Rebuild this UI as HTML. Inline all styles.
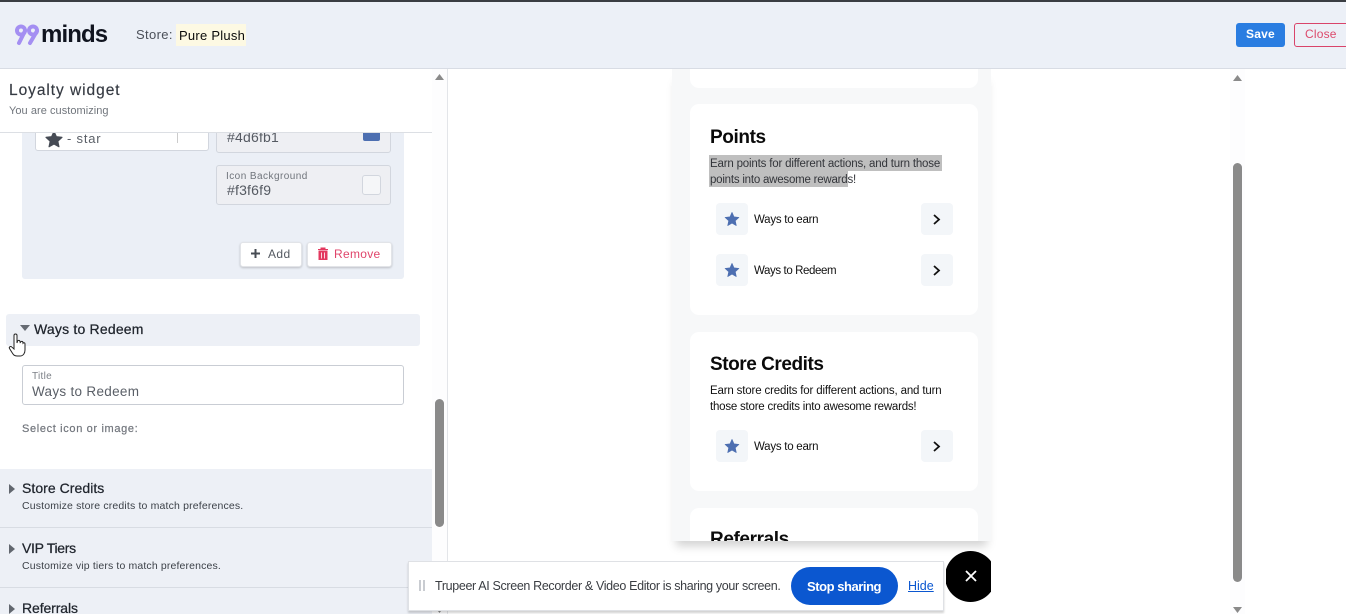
<!DOCTYPE html>
<html>
<head>
<meta charset="utf-8">
<style>
html,body{margin:0;padding:0;background:#fff;}
#r{position:relative;width:1346px;height:614px;overflow:hidden;background:#fff;font-family:"Liberation Sans",sans-serif;}
#r div,#r span.a,#r svg{position:absolute;}
.t{white-space:nowrap;line-height:1;}
</style>
</head>
<body>
<div id="r">
<!-- header -->
<div style="left:0;top:0;width:1346px;height:2px;background:#3a3d42"></div>
<div style="left:0;top:2px;width:1346px;height:66px;background:#ecf0f7;border-bottom:1px solid #d8dce4"></div>
<svg style="left:14px;top:23px" width="27" height="23" viewBox="0 0 27 23"><g fill="none" stroke="#a48ff2" stroke-width="4" stroke-linecap="round"><circle cx="7" cy="7.500" r="4"/><path d="M11 8 L5 20"/><circle cx="19" cy="7.500" r="4"/><path d="M23 8 L16 20"/></g></svg>
<div class="t" style="left:41px;top:23px;font-size:24px;font-weight:bold;color:#10141f;letter-spacing:-.9px">minds</div>
<div class="t" style="left:136px;top:28px;font-size:13px;color:#4b5059;letter-spacing:.35px">Store:</div>
<div style="left:176px;top:24px;width:70px;height:22px;background:#fdf9e3"></div>
<div class="t" style="left:179px;top:29px;font-size:13px;color:#0b0b0b;letter-spacing:.25px">Pure Plush</div>
<div style="left:1236px;top:23px;width:49px;height:24px;background:#2a7de1;border-radius:3px"></div>
<div class="t" style="left:1246px;top:28px;font-size:12px;font-weight:bold;color:#fff;letter-spacing:.2px">Save</div>
<div style="left:1294px;top:23px;width:60px;height:22px;border:1px solid #d9446a;border-radius:3px"></div>
<div class="t" style="left:1305px;top:28px;font-size:12px;color:#dc4a6c;letter-spacing:.2px">Close</div>

<!-- left panel content -->
<div style="left:22px;top:125px;width:382px;height:154px;background:#ebeff6;border-radius:3px"></div>
<div style="left:35px;top:125px;width:172px;height:24px;background:#fff;border:1px solid #d2d6de;border-radius:3px"></div>
<div style="left:177px;top:130px;width:1px;height:13px;background:#ccc"></div>
<svg style="left:45px;top:130px" width="18" height="18" viewBox="0 0 24 23"><path d="M12 1.500l3.200 6.900 7.500.9-5.600 5.100 1.500 7.400L12 18.100l-6.600 3.700 1.500-7.400L1.300 9.300l7.500-.9z" fill="#464b55" stroke="#464b55" stroke-width="1.500" stroke-linejoin="round"/></svg>
<div class="t" style="left:67px;top:132px;font-size:13px;color:#5a5f67;letter-spacing:.8px">- star</div>
<div style="left:216px;top:125px;width:173px;height:26px;background:#eeeff3;border:1px solid #d2d6de;border-radius:3px"></div>
<div class="t" style="left:227px;top:130px;font-size:14px;color:#555a62;letter-spacing:.2px">#4d6fb1</div>
<div style="left:363px;top:125px;width:17px;height:16px;background:#4d6fb1;border-radius:2px"></div>
<div style="left:216px;top:165px;width:173px;height:38px;background:#eeeff3;border:1px solid #d2d6de;border-radius:3px"></div>
<div class="t" style="left:226px;top:172px;font-size:10px;color:#6f747b;letter-spacing:.45px">Icon Background</div>
<div class="t" style="left:227px;top:183px;font-size:14px;color:#555a62;letter-spacing:.2px">#f3f6f9</div>
<div style="left:362px;top:175px;width:17px;height:18px;background:#f5f6f8;border:1px solid #d2d6de;border-radius:3px"></div>
<div style="left:240px;top:242px;width:60px;height:23px;background:#fff;border:1px solid #e2e4e8;border-radius:3px;box-shadow:0 1px 2px rgba(0,0,0,.2)"></div>
<svg style="left:250px;top:248px" width="11" height="11" viewBox="0 0 11 11"><path d="M5.500 1v9M1 5.500h9" stroke="#474c54" stroke-width="2"/></svg>
<div class="t" style="left:268px;top:248px;font-size:12px;color:#555a62;letter-spacing:.4px">Add</div>
<div style="left:307px;top:242px;width:83px;height:23px;background:#fff;border:1px solid #e2e4e8;border-radius:3px;box-shadow:0 1px 2px rgba(0,0,0,.2)"></div>
<svg style="left:317px;top:247px" width="12" height="13" viewBox="0 0 12 13"><path d="M1 2.500h10M4 2.500V1h4v1.500M2 4h8v9H2z" fill="#e3385f" stroke="#e3385f" stroke-width="1"/><path d="M4.500 5.500v6M7.500 5.500v6" stroke="#fff" stroke-width=".8"/></svg>
<div class="t" style="left:334px;top:248px;font-size:12px;color:#e0456b;letter-spacing:.3px">Remove</div>

<!-- Ways to Redeem -->
<div style="left:6px;top:314px;width:414px;height:32px;background:#edf0f6;border-radius:3px"></div>
<svg style="left:20px;top:325px" width="10" height="6" viewBox="0 0 10 6"><path d="M0 0h10L5 6z" fill="#666b73"/></svg>
<div class="t" style="left:34px;top:322px;font-size:14px;color:#1f242c;letter-spacing:.2px;-webkit-text-stroke:.25px #1f242c">Ways to Redeem</div>
<svg style="left:8px;top:332px" width="20" height="26" viewBox="0 0 20 26"><path d="M6 15V3.500a1.500 1.500 0 0 1 3 0V11l.6-2a1.300 1.300 0 0 1 2.400.5l.2 1 .4-.4a1.200 1.200 0 0 1 2.300.6l.1.500a1.100 1.100 0 0 1 2 .6V18c0 3-1.600 6-5 6H9c-2.500 0-3.500-1-5-3.500L1.500 16.500c-.8-1.500 1.200-2.800 2.500-1.300L6 17z" fill="#fff" stroke="#222" stroke-width="1"/></svg>
<div style="left:22px;top:365px;width:380px;height:38px;background:#fff;border:1px solid #c9cdd4;border-radius:3px"></div>
<div class="t" style="left:32px;top:372px;font-size:10px;color:#7c8087;letter-spacing:.3px">Title</div>
<div class="t" style="left:32px;top:385px;font-size:13.500px;color:#5a5f67;letter-spacing:.3px">Ways to Redeem</div>
<div class="t" style="left:22px;top:424px;font-size:11px;color:#72767d;letter-spacing:.65px;-webkit-text-stroke:.2px #72767d">Select icon or image:</div>

<!-- accordion -->
<div style="left:0;top:469px;width:432px;height:145px;background:#edf0f6"></div>
<div style="left:0;top:527px;width:432px;height:1px;background:#d8dce3"></div>
<div style="left:0;top:587px;width:432px;height:1px;background:#d8dce3"></div>
<svg style="left:9px;top:484px" width="6" height="10" viewBox="0 0 6 10"><path d="M0 0l6 5-6 5z" fill="#62676f"/></svg>
<svg style="left:9px;top:544px" width="6" height="10" viewBox="0 0 6 10"><path d="M0 0l6 5-6 5z" fill="#62676f"/></svg>
<svg style="left:9px;top:604px" width="6" height="10" viewBox="0 0 6 10"><path d="M0 0l6 5-6 5z" fill="#62676f"/></svg>
<div class="t" style="left:22px;top:481px;font-size:14px;color:#1f242c;letter-spacing:.05px;-webkit-text-stroke:.25px #1f242c">Store Credits</div>
<div class="t" style="left:22px;top:501px;font-size:10.500px;color:#3c4148;letter-spacing:.16px">Customize store credits to match preferences.</div>
<div class="t" style="left:22px;top:541px;font-size:14px;color:#1f242c;letter-spacing:-.3px;-webkit-text-stroke:.25px #1f242c">VIP Tiers</div>
<div class="t" style="left:22px;top:561px;font-size:10.500px;color:#3c4148;letter-spacing:.14px">Customize vip tiers to match preferences.</div>
<div class="t" style="left:22px;top:601px;font-size:14px;color:#1f242c;letter-spacing:-.1px;-webkit-text-stroke:.25px #1f242c">Referrals</div>

<!-- left sticky heading -->
<div style="left:0;top:69px;width:432px;height:63px;background:#fff;border-bottom:1px solid #dcdfe4"></div>
<div class="t" style="left:9px;top:83px;font-size:15.500px;color:#353a42;letter-spacing:.95px;-webkit-text-stroke:.15px #353a42">Loyalty widget</div>
<div class="t" style="left:9px;top:106px;font-size:11px;color:#70757c;letter-spacing:.05px">You are customizing</div>

<!-- left scrollbar -->
<div style="left:432px;top:69px;width:15px;height:545px;background:#fdfdfe"></div>
<div style="left:447px;top:69px;width:1px;height:545px;background:#e3e5e9"></div>
<svg style="left:435px;top:74px" width="9" height="6" viewBox="0 0 9 6"><path d="M4.500 0L9 6H0z" fill="#8a8a8a"/></svg>
<div style="left:435px;top:399px;width:9px;height:128px;background:#8a8a8a;border-radius:5px"></div>

<!-- preview -->
<div style="left:672px;top:69px;width:319px;height:472px;background:#f7f8f9;box-shadow:0 9px 9px -4px rgba(0,0,0,.18)"></div>
<div style="left:690px;top:69px;width:288px;height:19px;background:#fff;border-radius:0 0 9px 9px"></div>
<div style="left:690px;top:104px;width:288px;height:211px;background:#fff;border-radius:9px"></div>
<div style="left:690px;top:332px;width:288px;height:159px;background:#fff;border-radius:9px"></div>
<div style="left:690px;top:508px;width:288px;height:33px;background:#fff;border-radius:9px 9px 0 0;overflow:hidden">
  <div class="t" style="left:20px;top:22px;font-size:19px;font-weight:bold;color:#0c0c0c;letter-spacing:-.4px">Referrals</div>
</div>

<div class="t" style="left:710px;top:128px;font-size:19px;font-weight:bold;color:#0a0a0a;letter-spacing:-.4px">Points</div>
<div style="left:709px;top:155px;width:233px;height:16px;background:#bfbfbf"></div>
<div style="left:709px;top:171px;width:139px;height:16px;background:#bfbfbf"></div>
<div class="t" style="left:710px;top:159px;font-size:11.500px;color:#33353a;letter-spacing:-.18px">Earn points for different actions, and turn those</div>
<div class="t" style="left:710px;top:175px;font-size:11.500px;color:#33353a;letter-spacing:-.22px">points into awesome rewards!</div>

<div style="left:716px;top:203px;width:32px;height:32px;background:#f3f6f9;border-radius:4px"></div>
<svg style="left:724px;top:211px" width="16" height="16" viewBox="0 0 24 24"><path d="M12 2l3 6.800 7.400.8-5.500 5 1.500 7.300L12 18.200l-6.400 3.700 1.500-7.300-5.500-5 7.400-.8z" fill="#4d6fb1" stroke="#4d6fb1" stroke-linejoin="round"/></svg>
<div class="t" style="left:754px;top:215px;font-size:11.500px;color:#111;letter-spacing:-.25px">Ways to earn</div>
<div style="left:921px;top:203px;width:32px;height:32px;background:#f3f6f9;border-radius:4px"></div>
<svg style="left:932px;top:214px" width="9" height="11" viewBox="0 0 9 11"><path d="M2 1l5 4.500L2 10" fill="none" stroke="#111" stroke-width="1.800"/></svg>

<div style="left:716px;top:254px;width:32px;height:32px;background:#f3f6f9;border-radius:4px"></div>
<svg style="left:724px;top:262px" width="16" height="16" viewBox="0 0 24 24"><path d="M12 2l3 6.800 7.400.8-5.500 5 1.500 7.300L12 18.200l-6.400 3.700 1.500-7.300-5.500-5 7.400-.8z" fill="#4d6fb1" stroke="#4d6fb1" stroke-linejoin="round"/></svg>
<div class="t" style="left:754px;top:266px;font-size:11.500px;color:#111;letter-spacing:-.4px">Ways to Redeem</div>
<div style="left:921px;top:254px;width:32px;height:32px;background:#f3f6f9;border-radius:4px"></div>
<svg style="left:932px;top:265px" width="9" height="11" viewBox="0 0 9 11"><path d="M2 1l5 4.500L2 10" fill="none" stroke="#111" stroke-width="1.800"/></svg>

<div class="t" style="left:710px;top:355px;font-size:19px;font-weight:bold;color:#0a0a0a;letter-spacing:-.45px">Store Credits</div>
<div class="t" style="left:710px;top:386px;font-size:11.500px;color:#111;letter-spacing:-.16px">Earn store credits for different actions, and turn</div>
<div class="t" style="left:710px;top:402px;font-size:11.500px;color:#111;letter-spacing:-.22px">those store credits into awesome rewards!</div>
<div style="left:716px;top:430px;width:32px;height:32px;background:#f3f6f9;border-radius:4px"></div>
<svg style="left:724px;top:438px" width="16" height="16" viewBox="0 0 24 24"><path d="M12 2l3 6.800 7.400.8-5.500 5 1.500 7.300L12 18.200l-6.400 3.700 1.500-7.300-5.500-5 7.400-.8z" fill="#4d6fb1" stroke="#4d6fb1" stroke-linejoin="round"/></svg>
<div class="t" style="left:754px;top:442px;font-size:11.500px;color:#111;letter-spacing:-.25px">Ways to earn</div>
<div style="left:921px;top:430px;width:32px;height:32px;background:#f3f6f9;border-radius:4px"></div>
<svg style="left:932px;top:441px" width="9" height="11" viewBox="0 0 9 11"><path d="M2 1l5 4.500L2 10" fill="none" stroke="#111" stroke-width="1.800"/></svg>

<!-- right scrollbar -->
<div style="left:1230px;top:69px;width:15px;height:545px;background:#fdfdfe"></div>
<svg style="left:1233px;top:75px" width="9" height="6" viewBox="0 0 9 6"><path d="M4.500 0L9 6H0z" fill="#8a8a8a"/></svg>
<div style="left:1233px;top:163px;width:9px;height:419px;background:#8a8a8a;border-radius:5px"></div>
<svg style="left:1233px;top:607px" width="9" height="6" viewBox="0 0 9 6"><path d="M0 0h9L4.500 6z" fill="#8a8a8a"/></svg>

<!-- sharing bar -->
<svg style="left:435px;top:607px" width="9" height="6" viewBox="0 0 9 6"><path d="M0 0h9L4.500 6z" fill="#8a8a8a"/></svg>
<div style="left:408px;top:561px;width:534px;height:48px;background:#fff;border:1px solid #dfe1e5;box-shadow:0 2px 2px rgba(0,0,0,.18)"></div>
<div style="left:419px;top:580px;width:2px;height:11px;background:#c9ccd1"></div>
<div style="left:423px;top:580px;width:2px;height:11px;background:#c9ccd1"></div>
<div class="t" style="left:435px;top:580px;font-size:12.500px;color:#3a3d42;letter-spacing:-.35px">Trupeer AI Screen Recorder &amp; Video Editor is sharing your screen.</div>
<div style="left:791px;top:567px;width:107px;height:38px;background:#0b57d0;border-radius:19px"></div>
<div class="t" style="left:807px;top:580px;font-size:13px;font-weight:bold;color:#fff;letter-spacing:-.45px">Stop sharing</div>
<div class="t" style="left:908px;top:580px;font-size:12.500px;color:#0b57d0;text-decoration:underline">Hide</div>
<div style="left:946px;top:551px;width:45px;height:51px;overflow:hidden">
  <div style="left:-1px;top:0;width:51px;height:51px;background:#000;border-radius:50%"></div>
</div>
<svg style="left:965px;top:570px" width="12" height="12" viewBox="0 0 12 12"><path d="M1 1l10 10M11 1L1 11" stroke="#fff" stroke-width="1.800"/></svg>
</div>
</body>
</html>
